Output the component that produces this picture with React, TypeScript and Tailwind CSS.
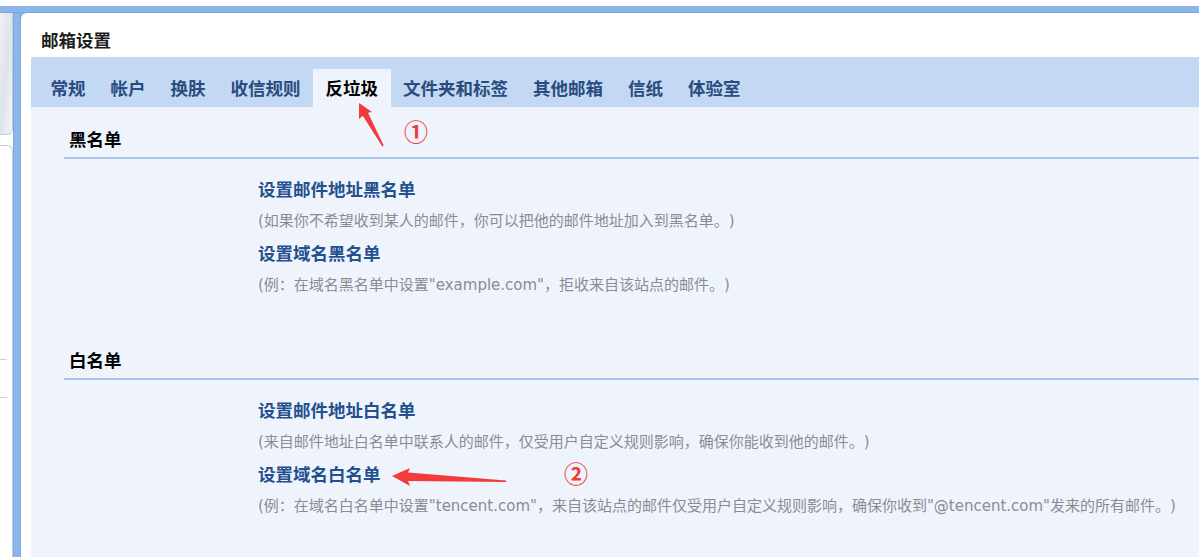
import React from "react";

const tabs = ["常规", "帐户", "换肤", "收信规则", "反垃圾", "文件夹和标签", "其他邮箱", "信纸", "体验室"];

function Section({ title, items }: { title: string; items: { t: string; d: string }[] }) {
  return (
    <div>
      <div className="ml-[33px] border-b-2 border-[#a7c4ec]">
        <div className="h-[32px] leading-[32px] pl-[5px] mb-[2px] text-[17.5px] font-bold text-black">{title}</div>
      </div>
      <div className="pl-[227px] pt-[14px]">
        {items.map((it) => (
          <div key={it.t}>
            <div className="h-[32px] leading-[32px] text-[17.5px] font-bold text-[#23508e]">{it.t}</div>
            <div className="h-[32px] leading-[32px] text-[15px] text-[#8a8c92] whitespace-nowrap [text-spacing-trim:space-all] font-['DejaVu_Sans','Noto_Sans_CJK_SC',sans-serif]">
              {it.d}
            </div>
          </div>
        ))}
      </div>
    </div>
  );
}

export default function App() {
  return (
    <div className="relative w-[1199px] h-[557px] overflow-hidden bg-white font-['Noto_Sans_CJK_SC','Noto_Sans',sans-serif]">
      <div className="h-[6px] bg-white" />
      <div className="h-[7px] bg-[#8cb5e8] border-b border-[#7ba5db]" />
      <div className="flex h-[544px] bg-[#8cb5e8]">
        {/* left column */}
        <div className="w-[13px] flex flex-col bg-white">
          <div className="h-[122px] bg-gradient-to-br from-[#eef1f5] via-[#dfe4ea] to-[#f3f5f8] rounded-br-[6px] border-r border-b border-[#b9cde6]" />
          <div className="h-[10px] bg-white" />
          <div className="flex-1 rounded-tr-[6px] border-r border-t border-[#b9cde6] bg-white flex flex-col">
            <div className="h-[213px]" />
            <div className="w-[7px] h-px bg-[#cfcfcf]" />
            <div className="h-[37px]" />
            <div className="w-[7px] h-px bg-[#cfcfcf]" />
          </div>
        </div>
        <div className="w-[8px] bg-[#8cb5e8] border-x border-[#7fa9de]" />
        {/* main panel */}
        <div className="flex-1 bg-white rounded-tl-[6px] pl-[10px] flex flex-col">
          <div className="h-[44px] pt-[10px] flex items-center pl-[10px] text-[17.5px] font-bold text-[#1d1d1d]">邮箱设置</div>
          <div className="h-[50px] bg-[#c3d8f2] flex items-end pl-[7px]">
            {tabs.map((t) => (
              <div
                key={t}
                className={
                  t === "反垃圾"
                    ? "h-[38px] px-[12.5px] flex items-center text-[17.5px] font-bold text-black bg-[#eff4fc]"
                    : "h-[38px] px-[12.5px] flex items-center text-[17.5px] font-bold text-[#2a4b80]"
                }
              >
                {t}
              </div>
            ))}
          </div>
          <div className="flex-1 bg-[#eff4fc] pt-[16px]">
            <Section
              title="黑名单"
              items={[
                { t: "设置邮件地址黑名单", d: "(如果你不希望收到某人的邮件，你可以把他的邮件地址加入到黑名单。)" },
                { t: "设置域名黑名单", d: "(例：在域名黑名单中设置\"example.com\"，拒收来自该站点的邮件。)" },
              ]}
            />
            <div className="h-[43px]" />
            <Section
              title="白名单"
              items={[
                { t: "设置邮件地址白名单", d: "(来自邮件地址白名单中联系人的邮件，仅受用户自定义规则影响，确保你能收到他的邮件。)" },
                {
                  t: "设置域名白名单",
                  d: "(例：在域名白名单中设置\"tencent.com\"，来自该站点的邮件仅受用户自定义规则影响，确保你收到\"@tencent.com\"发来的所有邮件。)",
                },
              ]}
            />
          </div>
        </div>
      </div>

      {/* annotations */}
      <svg className="absolute left-0 top-0 pointer-events-none" width="1199" height="557" viewBox="0 0 1199 557">
        <polygon
          fill="#f23b3b"
          points="359,103 372,112 368,112.8 383.7,145.6 382.3,146.4 362.8,115.8 359,119"
        />
        <polygon
          fill="#f23b3b"
          points="392,476 410,468 408,472.5 506,480.5 506,482 408,481 410,486"
        />
      </svg>
      <span className="absolute left-[404px] top-[119px] w-[24px] h-[24px] leading-[24px] text-center text-[24px] font-bold text-[#f33b3b]">①</span>
      <span className="absolute left-[564px] top-[461px] w-[24px] h-[24px] leading-[24px] text-center text-[24px] font-bold text-[#f33b3b]">②</span>
    </div>
  );
}
